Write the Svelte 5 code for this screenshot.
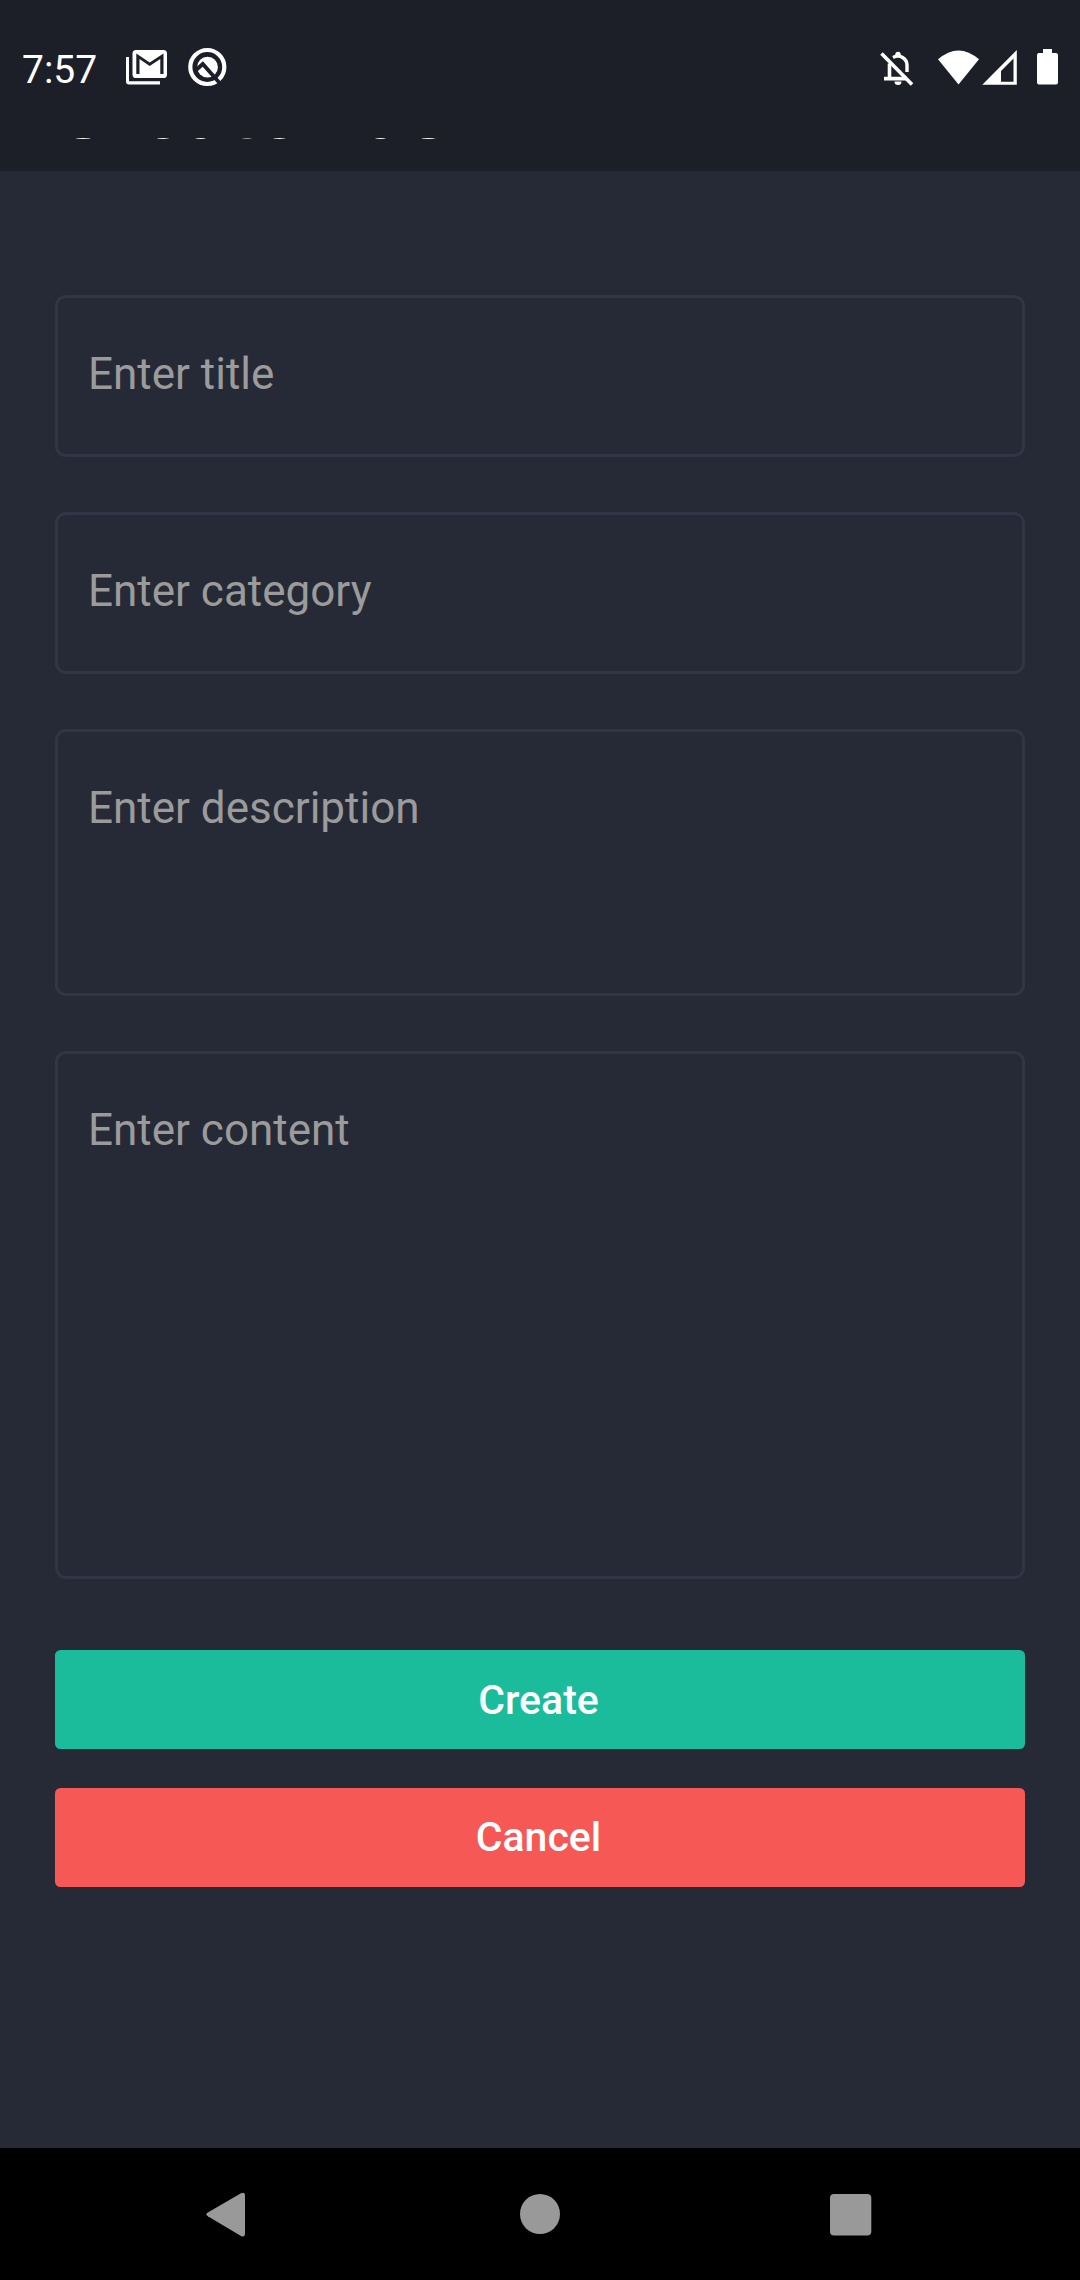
<script>
  const fields = [
    { label: 'Enter title', size: 'single' },
    { label: 'Enter category', size: 'single' },
    { label: 'Enter description', size: 'medium' },
    { label: 'Enter content', size: 'large' }
  ];
</script>

<div class="screen">
  <header>
    <div class="status">
      <span class="time">7:57</span>
      <svg class="mail" width="42" height="36" viewBox="126 49 42 36">
        <path d="M126 57h3v24.300h31v3.200h-31a3 3 0 0 1-3-3z" fill="#fff" />
        <rect x="132.500" y="50" width="34.500" height="28" rx="3.600" fill="#fff" />
        <path d="M136.300 53.500 149.700 62.500 163.500 53.500V74H160.300V59L149.700 66 139.500 59V74H136.300Z" fill="#1d1f28" />
      </svg>
      <svg class="quick" width="40" height="40" viewBox="187 47 40 40">
        <circle cx="207.300" cy="67" r="17" fill="none" stroke="#fff" stroke-width="4.200" />
        <circle cx="207.500" cy="67.200" r="10.400" fill="#fff" />
        <path d="M195.500 70.500 202.800 64 220.500 84" fill="none" stroke="#1d1f28" stroke-width="3.800" />
      </svg>
      <span class="spacer"></span>
      <svg class="bell" width="36" height="38" viewBox="879 49 36 38" fill="none" stroke="#fff">
        <path d="M881.500 53.500 912 84.500" stroke-width="3.600" />
        <path d="M884 78.600H907M889.500 77V63.500" stroke-width="3.600" />
        <path d="M893 57.400C900 53.500 907 59 907 65V72" stroke-width="3.400" />
        <path d="M895.300 56V54.500a2.700 2.700 0 0 1 5.400 0V56Z" fill="#fff" stroke="none" />
        <path d="M894.500 81.500h7a3.500 3.500 0 0 1-7 0z" fill="#fff" stroke="none" />
      </svg>
      <svg class="wifi" width="41" height="35" viewBox="938 50 41 35">
        <path d="M938 59.300Q958.500 41.500 979 59.300L958.500 84.500Z" fill="#fff" />
      </svg>
      <svg class="signal" width="36" height="35" viewBox="982 50 36 35">
        <path fill-rule="evenodd" d="M982.300 84.700 1016.800 50V84.700ZM1001 71V81.700H1013.500V58.500Z" fill="#fff" />
      </svg>
      <svg class="battery" width="21" height="36" viewBox="1037 49 21 36">
        <path d="M1043 49H1052V53H1056a2 2 0 0 1 2 2V82.500a2 2 0 0 1-2 2H1039a2 2 0 0 1-2-2V55a2 2 0 0 1 2-2H1043Z" fill="#fff" />
      </svg>
    </div>
    <div class="title-clip"><h1>Create Task</h1></div>
  </header>

  <main>
    <div class="fields">
      {#each fields as field}
        <div class="field {field.size}"><span>{field.label}</span></div>
      {/each}
    </div>
    <div class="actions">
      <button class="create">Create</button>
      <button class="cancel">Cancel</button>
    </div>
  </main>

  <nav>
    <svg width="40" height="46" viewBox="205 2191 40 46">
      <path d="M207.800 2212.500 241 2193.300Q245 2191.500 245 2196V2233Q245 2238 241 2236L207.800 2216.200Q205 2214.300 207.800 2212.500Z" fill="#999" />
    </svg>
    <svg class="home" width="40" height="40" viewBox="0 0 40 40"><circle cx="20" cy="20" r="20" fill="#999" /></svg>
    <svg class="recent" width="42" height="42" viewBox="0 0 42 42"><rect width="41.300" height="41.500" rx="4" fill="#999" /></svg>
  </nav>
</div>

<style>
  :global(body) { margin: 0; background: #262a36; }
  .screen {
    width: 1080px;
    height: 2280px;
    display: flex;
    flex-direction: column;
    background: #262a36;
    font-family: Roboto, sans-serif;
    overflow: hidden;
  }
  header { height: 171px; background: #1d1f28; flex: none; }
  .status {
    height: 138px;
    display: flex;
    align-items: flex-start;
    padding: 0 22px;
    box-sizing: border-box;
  }
  .status svg { display: block; flex: none; }
  .time { width: 104px; margin-top: 47px; font-size: 39px; line-height: 46px; color: #fff; white-space: nowrap; }
  .mail { margin-top: 49px; }
  .quick { margin: 47px 0 0 19px; }
  .spacer { flex: 1; }
  .bell { margin: 49px 23px 0 0; }
  .wifi { margin: 50px 3px 0 0; }
  .signal { margin: 50px 19px 0 0; }
  .battery { margin-top: 49px; }
  .title-clip { height: 33px; padding-left: 55px; overflow: hidden; display: flex; align-items: flex-start; }
  h1 { margin: -77px 0 0; font-size: 82.500px; line-height: 97px; font-weight: 700; color: #f8f8f2; white-space: nowrap; }
  main { flex: 1; padding: 124px 55px 0; }
  .fields { display: flex; flex-direction: column; gap: 55px; }
  .field {
    box-sizing: border-box;
    border: 3px solid #323546;
    border-radius: 11px;
    padding: 50px 30px 0;
    font-size: 44px;
    line-height: 52px;
    color: #9b9b9b;
  }
  .single { height: 162px; }
  .medium { height: 267px; }
  .large { height: 528px; }
  .actions { display: flex; flex-direction: column; gap: 38.500px; padding-top: 71.300px; }
  button {
    height: 99px;
    border: 0;
    border-radius: 5.500px;
    padding: 1px 3px 0 0;
    font: 500 41px/98px Roboto, sans-serif;
    color: #fff;
  }
  .create { background: #1abc9c; }
  .cancel { background: #f55855; padding: 0 3px 1px 0; }
  nav {
    flex: none;
    height: 132px;
    background: #000;
    display: flex;
    align-items: center;
    padding: 0 208px 0 205px;
    justify-content: space-between;
  }
  .home { margin-left: 5px; }
  .recent { margin-top: 2px; }
</style>
